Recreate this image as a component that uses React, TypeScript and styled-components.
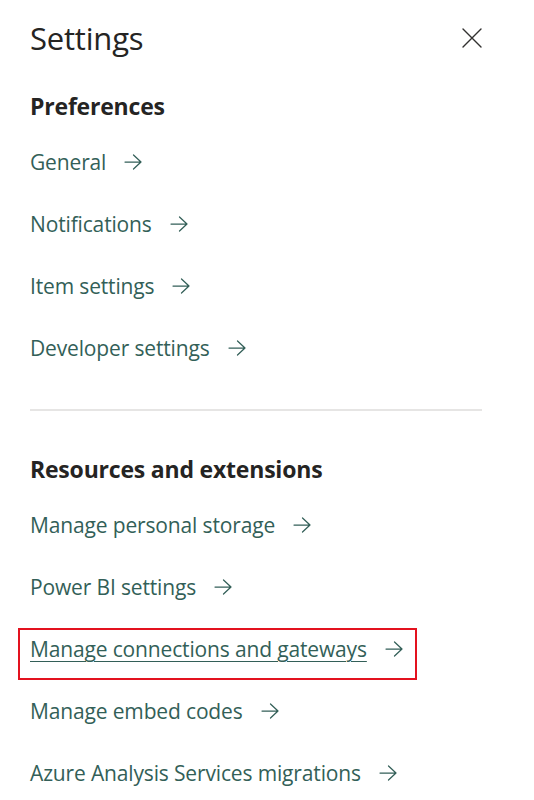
import React from 'react';
import styled, { createGlobalStyle } from 'styled-components';

const GlobalStyle = createGlobalStyle`
  html, body {
    margin: 0;
    padding: 0;
    background: #ffffff;
  }
  body {
    font-family: "Open Sans", "Noto Sans", "Liberation Sans", sans-serif;
  }
`;

const Panel = styled.div`
  width: 534px;
  height: 800px;
  box-sizing: border-box;
  padding: 16px 52px 0 30px;
  background: #ffffff;
  overflow: hidden;
`;

const Header = styled.div`
  display: flex;
  align-items: center;
  justify-content: space-between;
  height: 44px;
`;

const Title = styled.h1`
  margin: 0;
  font-size: 31px;
  font-weight: 400;
  color: #252423;
  letter-spacing: -0.2px;
  line-height: 44px;
`;

const CloseButton = styled.button`
  border: 0;
  background: none;
  padding: 0;
  width: 22px;
  height: 22px;
  display: flex;
  align-items: center;
  justify-content: center;
  cursor: pointer;
  margin-right: -1px;
`;

const Section = styled.section`
  display: flex;
  flex-direction: column;
`;

const SectionTitle = styled.h2<{ $top: number }>`
  margin: ${p => p.$top}px 0 0;
  font-size: 23px;
  font-weight: 700;
  color: #252423;
  line-height: 32px;
  letter-spacing: -0.2px;
`;

const List = styled.ul`
  list-style: none;
  margin: 9px 0 0;
  padding: 0;
  display: flex;
  flex-direction: column;
`;

const Item = styled.li<{ $highlight?: boolean }>`
  height: 62px;
  display: flex;
  align-items: center;
  align-self: flex-start;
  box-sizing: border-box;
  ${p =>
    p.$highlight &&
    `
    height: 52px;
    margin: 10px 0 0 -12px;
    padding: 0 12px 10px 10px;
    border: 2px solid #e3121f;
  `}
`;

const Link = styled.a<{ $underline?: boolean }>`
  display: inline-flex;
  align-items: center;
  gap: 18px;
  font-size: 21px;
  color: #335f58;
  text-decoration: none;
  letter-spacing: -0.15px;
  cursor: pointer;
  span {
    text-decoration: ${p => (p.$underline ? 'underline' : 'none')};
    text-underline-offset: 4px;
    text-decoration-thickness: 1px;
  }
`;

const Divider = styled.hr`
  border: 0;
  border-top: 2px solid #e6e5e4;
  margin: 30px 0 0;
  width: 452px;
`;

const Arrow = () => (
  <svg width="18" height="16" viewBox="0 0 18 16" fill="none">
    <path
      d="M1 8h16M9.5 1 17 8l-7.5 7"
      stroke="#335f58"
      strokeWidth="1.25"
      strokeLinecap="round"
      strokeLinejoin="round"
    />
  </svg>
);

const preferences = ['General', 'Notifications', 'Item settings', 'Developer settings'];
const resources = [
  'Manage personal storage',
  'Power BI settings',
  'Manage connections and gateways',
  'Manage embed codes',
  'Azure Analysis Services migrations',
];

export default function App() {
  return (
    <>
      <GlobalStyle />
      <Panel>
        <Header>
          <Title>Settings</Title>
          <CloseButton aria-label="Close">
            <svg width="20" height="20" viewBox="0 0 20 20">
              <path d="M1 1l18 18M19 1L1 19" stroke="#323130" strokeWidth="1.4" strokeLinecap="round" />
            </svg>
          </CloseButton>
        </Header>
        <Section>
          <SectionTitle $top={30}>Preferences</SectionTitle>
          <List>
            {preferences.map(label => (
              <Item key={label}>
                <Link>
                  <span>{label}</span>
                  <Arrow />
                </Link>
              </Item>
            ))}
          </List>
        </Section>
        <Divider />
        <Section>
          <SectionTitle $top={42}>Resources and extensions</SectionTitle>
          <List>
            {resources.map(label => {
              const hl = label === 'Manage connections and gateways';
              return (
                <Item key={label} $highlight={hl}>
                  <Link $underline={hl}>
                    <span>{label}</span>
                    <Arrow />
                  </Link>
                </Item>
              );
            })}
          </List>
        </Section>
      </Panel>
    </>
  );
}
